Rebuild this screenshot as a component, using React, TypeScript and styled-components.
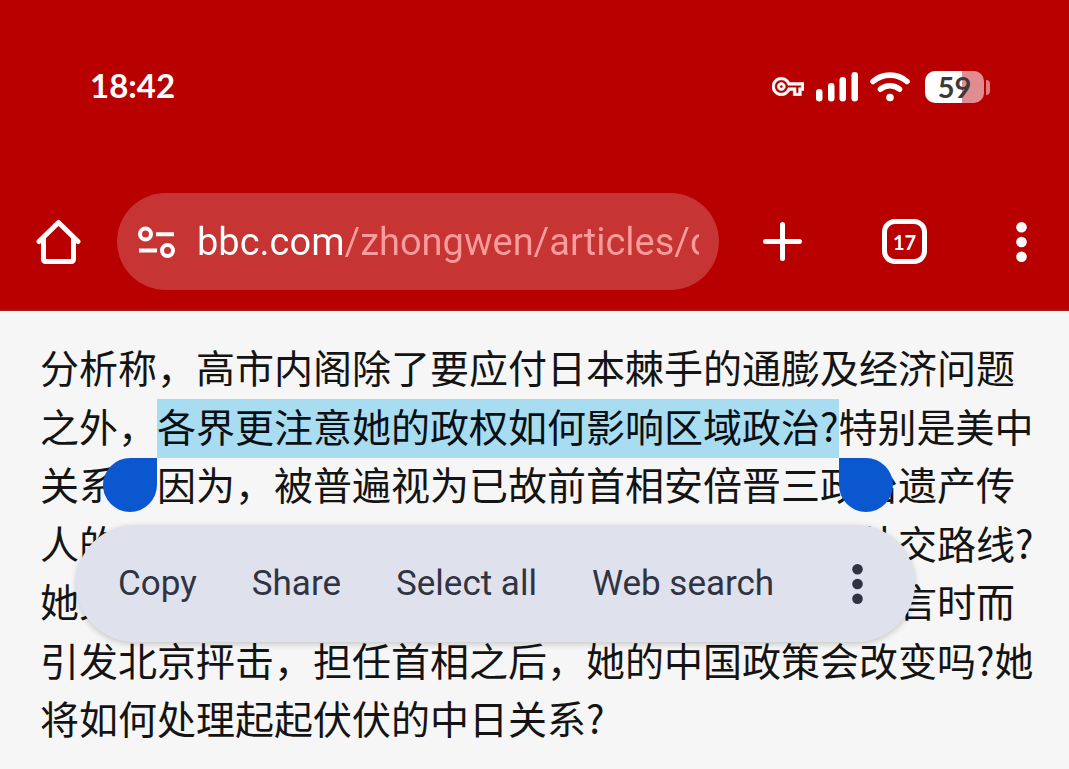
import React from 'react';
import styled, { createGlobalStyle } from 'styled-components';

const GlobalStyle = createGlobalStyle`
  * { box-sizing: border-box; }
  body { margin: 0; background: #f6f6f6; }
`;

const Screen = styled.div`
  font-family: Roboto, "Noto Sans CJK SC", sans-serif;
`;

const Header = styled.header`
  background: #b80000;
  color: #fff;
  border-bottom: 2px solid #a01818;
`;

const StatusBar = styled.div`
  display: flex;
  align-items: center;
  justify-content: space-between;
  padding: 66px 79px 0 90px;
  height: 107px;
`;

const Clock = styled.time`
  padding-bottom: 3px;
  font: 700 33px/40px Lato, sans-serif;
`;

const StatusIcons = styled.div`
  display: flex;
  align-items: center;
  gap: 12px;

  svg { display: block; }
`;

const Battery = styled.div`
  position: relative;
  width: 59px;
  height: 32px;
  border-radius: 10px;
  margin: 0 6px 0 3px;
  background: linear-gradient(to right, #fff 37px, #e08c90 37px);
  color: #3a3a3a;
  font: 700 29px/31px Lato, sans-serif;
  text-align: center;

  &::after {
    content: "";
    position: absolute;
    left: 100%;
    top: 9px;
    margin-left: 2px;
    width: 4px;
    height: 15px;
    border-radius: 0 4px 4px 0;
    background: #dc7c80;
  }
`;

const Toolbar = styled.div`
  display: flex;
  align-items: center;
  padding: 86px 42px 19px 36px;
`;

const IconButton = styled.button<{ $gap?: number }>`
  display: flex;
  flex: none;
  align-items: center;
  justify-content: center;
  margin: 0 0 0 ${(p) => p.$gap ?? 0}px;
  padding: 0;
  border: 0;
  background: none;
  color: inherit;
  cursor: pointer;

  svg { display: block; }
`;

const TabsButton = styled(IconButton)`
  width: 45px;
  height: 45px;
  border: 5px solid #fff;
  border-radius: 13px;
  font: 700 20px/24px Lato, sans-serif;
`;

const AddressBar = styled.div`
  display: flex;
  flex: 1;
  align-items: center;
  min-width: 0;
  height: 97px;
  margin-left: 36px;
  padding: 0 20px;
  border-radius: 49px;
  background: #c63434;
`;

const AddressInput = styled.input`
  flex: 1;
  min-width: 0;
  height: 60px;
  margin-left: 20px;
  padding: 0;
  border: 0;
  outline: 0;
  background: linear-gradient(to right, #fff 147px, #fb9c9c 147px);
  background-clip: text;
  -webkit-background-clip: text;
  color: #fff;
  -webkit-text-fill-color: transparent;
  font: 400 38px/60px Roboto, sans-serif;
`;

const Article = styled.main`
  position: relative;
  padding: 26px 31px 20px 40px;
`;

const Paragraph = styled.p`
  margin: 0;
  color: #141414;
  font: 400 39px/1.5 "Noto Sans CJK SC", sans-serif;
`;

const Selection = styled.mark`
  position: relative;
  padding-bottom: 5px;
  background: linear-gradient(to bottom, transparent 2px, #a8dcf0 2px);
  color: #0a0f14;

  &::before,
  &::after {
    content: "";
    position: absolute;
    top: 100%;
    width: 54px;
    height: 54px;
    background: #0b57d0;
  }
  &::before {
    right: 100%;
    border-radius: 27px 0 27px 27px;
  }
  &::after {
    left: 100%;
    border-radius: 0 27px 27px 27px;
  }
`;

/* Stretch of a line that lies wholly under the floating menu. */
const Covered = styled.span<{ $chars: number }>`
  display: inline-block;
  width: ${(p) => p.$chars}em;
`;

const ActionMenu = styled.div`
  position: absolute;
  z-index: 1;
  top: 214px;
  left: 76px;
  display: flex;
  align-items: center;
  gap: 55px;
  width: 839px;
  height: 117px;
  padding: 0 52px 0 42px;
  border-radius: 59px;
  background: #dfe1ed;
  color: #2f3342;
  box-shadow: 0 2px 6px rgba(0, 0, 0, 0.2);
`;

const Action = styled.button`
  padding: 0;
  border: 0;
  background: none;
  color: inherit;
  font: 400 35px/48px Roboto, sans-serif;
  white-space: nowrap;
  cursor: pointer;
`;

const MoreAction = styled(IconButton)`
  margin-left: auto;
`;

const Dots = () => (
  <svg width="11" height="40" viewBox="0 0 11 40" fill="currentColor" aria-hidden="true">
    <circle cx="5.5" cy="5.3" r="5.3" />
    <circle cx="5.5" cy="20" r="5.3" />
    <circle cx="5.5" cy="34.7" r="5.3" />
  </svg>
);

const KeyIcon = () => (
  <svg width="32" height="19" viewBox="0 5 24 14" fill="#fff" stroke="#fff" strokeWidth="0.4" aria-hidden="true">
    <path d="M22 19h-6v-4h-2.68c-1.14 2.42-3.6 4-6.32 4-3.86 0-7-3.14-7-7s3.14-7 7-7c2.72 0 5.17 1.58 6.32 4H24v6h-2v4zm-4-2h2v-4h2v-2H11.94l-.23-.67C11.01 8.34 9.11 7 7 7c-2.76 0-5 2.24-5 5s2.24 5 5 5c2.11 0 4.01-1.34 4.71-3.33l.23-.67H18v4zM7 15c-1.65 0-3-1.35-3-3s1.35-3 3-3 3 1.35 3 3-1.35 3-3 3zm0-4.200a1.200 1.200 0 1 0 0 2.400a1.200 1.200 0 1 0 0-2.400z" fillRule="evenodd" />
  </svg>
);

const SignalIcon = () => (
  <svg width="42" height="30" viewBox="0 0 42 30" fill="#fff" aria-hidden="true">
    <rect x="0" y="17" width="6.5" height="12.5" rx="3.2" />
    <rect x="12" y="11" width="6.5" height="18.5" rx="3.2" />
    <rect x="23.500" y="5" width="6.5" height="24.5" rx="3.2" />
    <rect x="35.500" y="0" width="6.5" height="29.5" rx="3.2" />
  </svg>
);

const WifiIcon = () => (
  <svg width="40" height="30" viewBox="0 0 40 30" aria-hidden="true">
    <g fill="none" stroke="#fff" strokeWidth="5.6" strokeLinecap="round">
      <path d="M3 9.500C12.500 1 27.500 1 37 9.500" />
      <path d="M10.500 17.200c5.500-4.600 13.500-4.600 19 0" />
    </g>
    <circle cx="20" cy="25.500" r="3.800" fill="#fff" />
  </svg>
);

const HomeIcon = () => (
  <svg width="45" height="45" viewBox="0 0 45 45" fill="none" stroke="#fff" strokeWidth="5" strokeLinecap="round" strokeLinejoin="round" aria-hidden="true">
    <path d="M3 22.500 22.500 3.500 42 22.500" />
    <path d="M7.500 20v20.500c0 1.100.9 2 2 2h26c1.100 0 2-.9 2-2V20" />
  </svg>
);

const SiteSettingsIcon = () => (
  <svg width="40" height="34" viewBox="0 0 40 34" fill="none" stroke="#fff" strokeWidth="4" aria-hidden="true">
    <circle cx="8.500" cy="9" r="5.500" />
    <path d="M19 9.300h18M2 25.500h18" />
    <circle cx="30.500" cy="25.500" r="5.500" />
  </svg>
);

const PlusIcon = () => (
  <svg width="39" height="39" viewBox="0 0 39 39" stroke="#fff" strokeWidth="5" strokeLinecap="round" aria-hidden="true">
    <path d="M19.500 2.500v34M2.500 19.500h34" />
  </svg>
);

const actions = ['Copy', 'Share', 'Select all', 'Web search'];

export default function App() {
  return (
    <Screen>
      <GlobalStyle />
      <Header>
        <StatusBar>
          <Clock>18:42</Clock>
          <StatusIcons>
            <KeyIcon />
            <SignalIcon />
            <WifiIcon />
            <Battery>59</Battery>
          </StatusIcons>
        </StatusBar>
        <Toolbar>
          <IconButton aria-label="Home"><HomeIcon /></IconButton>
          <AddressBar>
            <IconButton aria-label="Site settings"><SiteSettingsIcon /></IconButton>
            <AddressInput aria-label="Address" defaultValue="bbc.com/zhongwen/articles/c" />
          </AddressBar>
          <IconButton $gap={44} aria-label="New tab"><PlusIcon /></IconButton>
          <TabsButton $gap={80} aria-label="17 open tabs">17</TabsButton>
          <IconButton $gap={89} aria-label="Browser menu"><Dots /></IconButton>
        </Toolbar>
      </Header>
      <Article lang="zh-Hans">
        <Paragraph>
          分析称，高市内阁除了要应付日本棘手的通膨及经济问题之外，<Selection>各界更注意她的政权如何影响区域政治?</Selection>特别是美中关系。因为，被普遍视为已故前首相安倍晋三政治遗产传人的<Covered $chars={19} />外交路线?她又<Covered $chars={20} />言时而引发北京抨击，担任首相之后，她的中国政策会改变吗?她将如何处理起起伏伏的中日关系?
        </Paragraph>
        <ActionMenu role="toolbar" aria-label="Text selection" lang="en">
          {actions.map((label) => <Action key={label}>{label}</Action>)}
          <MoreAction aria-label="More options"><Dots /></MoreAction>
        </ActionMenu>
      </Article>
    </Screen>
  );
}
